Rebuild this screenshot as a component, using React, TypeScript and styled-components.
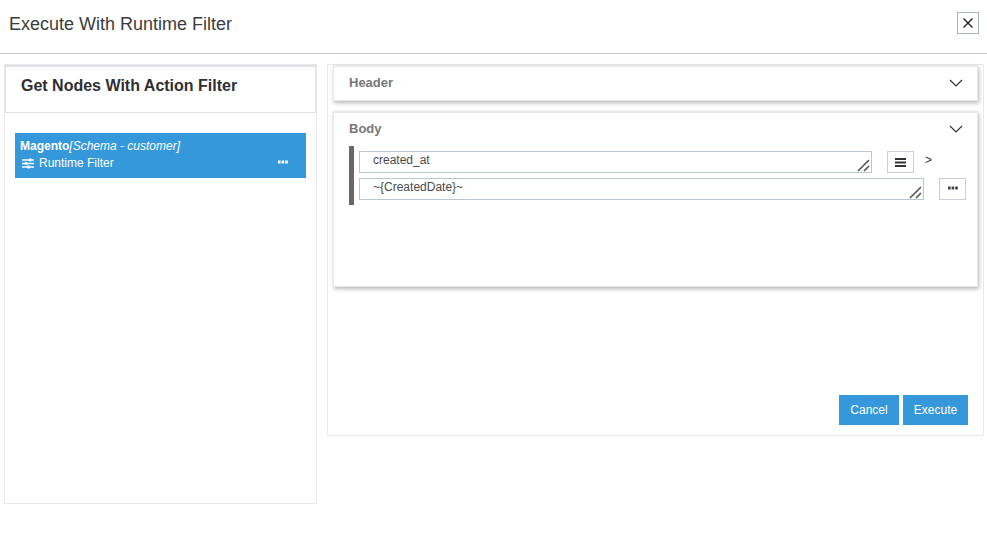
import React from "react";
import styled, { createGlobalStyle } from "styled-components";

const Global = createGlobalStyle`
  html, body { margin: 0; padding: 0; background: #fff; }
  body { font-family: "Liberation Sans", Arial, sans-serif; color: #333; }
  * { box-sizing: border-box; }
`;

const Page = styled.div`
  width: 987px;
  height: 535px;
  overflow: hidden;
  background: #fff;
`;

const TitleBar = styled.header`
  height: 54px;
  display: flex;
  align-items: flex-start;
  justify-content: space-between;
  border-bottom: 1px solid #c9cccd;
  padding: 12px 8px 0 9px;
`;

const Title = styled.h1`
  margin: 0;
  font-size: 18px;
  line-height: 24px;
  font-weight: 400;
  color: #3c3c3c;
`;

const CloseButton = styled.button`
  width: 22px;
  height: 22px;
  padding: 0;
  display: flex;
  align-items: center;
  justify-content: center;
  background: #fff;
  border: 1px solid #a8b4be;
`;

const Content = styled.main`
  display: flex;
  align-items: flex-start;
  padding: 10px 3px 0 4px;
  gap: 10px;
`;

const LeftPanel = styled.section`
  width: 313px;
  height: 440px;
  border: 1px solid #e6e8ea;
`;

const LeftHead = styled.div`
  height: 48px;
  border: 1px solid #e0e2e5;
  border-top-width: 2px;
  padding: 8px 0 0 15px;
`;

const LeftTitle = styled.h2`
  margin: 0;
  font-size: 16px;
  line-height: 22px;
  font-weight: 700;
  color: #2f2f33;
`;

const LeftBody = styled.div`
  padding: 20px 10px;
`;

const Card = styled.div`
  height: 45px;
  background: #3498db;
  color: #fff;
  padding: 5px 5px 0 5px;
  font-size: 12px;
  line-height: 17px;
`;

const CardLine = styled.div`
  display: flex;
  align-items: center;
  white-space: nowrap;
`;

const Strong = styled.strong`
  font-weight: 700;
`;

const Em = styled.em`
  font-style: italic;
`;

const SliderIcon = styled.svg`
  margin-left: 2px;
`;

const FilterLabel = styled.span`
  margin-left: 5px;
  flex: 1;
`;

const CardDots = styled.span`
  display: flex;
  margin: 0 13px 4px 0;
`;

const RightPanel = styled.section`
  width: 657px;
  height: 372px;
  border: 1px solid #e8eaeb;
  padding: 0 5px;
  display: flex;
  flex-direction: column;
`;

const Accordion = styled.div<{ $height: number }>`
  height: ${(p) => p.$height}px;
  margin-bottom: 10px;
  background: #fff;
  border: 1px solid #e6e8ea;
  border-top-width: 2px;
  box-shadow: 1px 2px 4px rgba(0, 0, 0, 0.28);
  padding: 0 11px 0 15px;
`;

const AccordionHead = styled.div`
  display: flex;
  justify-content: space-between;
  align-items: center;
  padding-top: 5px;
  height: 20px;
  box-sizing: content-box;
`;

const AccordionTitle = styled.span`
  font-size: 13px;
  font-weight: 700;
  color: #787878;
`;

const Chevron = styled.svg`
  margin: 2px 3px 0 0;
`;

const Group = styled.div`
  margin-top: 8px;
  border-left: 5px solid #6b6767;
  padding: 5px 0 5px 5px;
  display: flex;
  flex-direction: column;
  gap: 5px;
  height: 59px;
`;

const Row = styled.div`
  display: flex;
  align-items: flex-start;
`;

const Field = styled.div<{ $width: number }>`
  position: relative;
  flex: none;
  width: ${(p) => p.$width}px;
  height: 22px;
  border: 1px solid #bcc6d2;
  font-size: 12px;
  line-height: 14px;
  padding: 1px 0 0 13px;
  color: #4b4b4b;
`;

const Handle = styled.svg`
  position: absolute;
  right: 0;
  bottom: 0;
`;

const IconButton = styled.button<{ $left: number }>`
  flex: none;
  width: 27px;
  height: 22px;
  margin-left: ${(p) => p.$left}px;
  padding: 0;
  display: flex;
  align-items: center;
  justify-content: center;
  background: #fff;
  border: 1px solid #c9cfd6;
`;

const MoreDots = styled.span`
  display: flex;
  margin-bottom: 3px;
`;

const Operator = styled.span`
  margin: 2px 0 0 11px;
  font-size: 12px;
  line-height: 14px;
  color: #333;
`;

const Actions = styled.div`
  margin-top: auto;
  padding: 0 10px 10px 0;
  display: flex;
  justify-content: flex-end;
  gap: 4px;
`;

const ActionButton = styled.button<{ $width: number }>`
  width: ${(p) => p.$width}px;
  height: 30px;
  padding: 0;
  border: none;
  background: #3498db;
  color: #fff;
  font-family: "Liberation Sans", Arial, sans-serif;
  font-size: 12px;
`;

const ResizeGrip = () => (
  <Handle width="14" height="14" viewBox="0 0 14 14">
    <path d="M1 13 L12 2 M7 13 L12 8" stroke="#555" strokeWidth="1.6" fill="none" />
  </Handle>
);

const Down = () => (
  <Chevron width="14" height="8" viewBox="0 0 14 8">
    <path d="M1 1 L7 7 L13 1" stroke="#333" strokeWidth="1.2" fill="none" />
  </Chevron>
);

const Dots = ({ color }: { color: string }) => (
  <svg width="10" height="4" viewBox="0 0 10 4">
    <rect x="0" y="0.5" width="2.6" height="3" fill={color} />
    <rect x="3.6" y="0.5" width="2.6" height="3" fill={color} />
    <rect x="7.2" y="0.5" width="2.6" height="3" fill={color} />
  </svg>
);

export default function App() {
  return (
    <Page>
      <Global />
      <TitleBar>
        <Title>Execute With Runtime Filter</Title>
        <CloseButton aria-label="Close">
          <svg width="12" height="12" viewBox="0 0 12 12">
            <path d="M1.5 1.5 L10.5 10.5 M10.5 1.5 L1.5 10.5" stroke="#222" strokeWidth="1.4" fill="none" />
          </svg>
        </CloseButton>
      </TitleBar>
      <Content>
        <LeftPanel>
          <LeftHead>
            <LeftTitle>Get Nodes With Action Filter</LeftTitle>
          </LeftHead>
          <LeftBody>
            <Card>
              <CardLine>
                <Strong>Magento</Strong>
                <Em>[Schema - customer]</Em>
              </CardLine>
              <CardLine>
                <SliderIcon width="12" height="11" viewBox="0 0 12 11">
                  <path d="M0 2 H12 M0 5.5 H12 M0 9 H12" stroke="#fff" strokeWidth="1.3" />
                  <rect x="7" y="0.5" width="2.2" height="3" fill="#fff" />
                  <rect x="3" y="4" width="2.2" height="3" fill="#fff" />
                  <rect x="5.5" y="7.5" width="2.2" height="3" fill="#fff" />
                </SliderIcon>
                <FilterLabel>Runtime Filter</FilterLabel>
                <CardDots>
                  <Dots color="#fff" />
                </CardDots>
              </CardLine>
            </Card>
          </LeftBody>
        </LeftPanel>
        <RightPanel>
          <Accordion $height={36}>
            <AccordionHead>
              <AccordionTitle>Header</AccordionTitle>
              <Down />
            </AccordionHead>
          </Accordion>
          <Accordion $height={176}>
            <AccordionHead>
              <AccordionTitle>Body</AccordionTitle>
              <Down />
            </AccordionHead>
            <Group>
              <Row>
                <Field $width={513}>
                  created_at
                  <ResizeGrip />
                </Field>
                <IconButton $left={15} aria-label="Menu">
                  <svg width="11" height="9" viewBox="0 0 11 9">
                    <path d="M0 1 H11 M0 4.5 H11 M0 8 H11" stroke="#333" strokeWidth="1.8" />
                  </svg>
                </IconButton>
                <Operator>&gt;</Operator>
              </Row>
              <Row>
                <Field $width={565}>
                  ~{"{"}CreatedDate{"}"}~
                  <ResizeGrip />
                </Field>
                <IconButton $left={15} aria-label="More">
                  <MoreDots>
                    <Dots color="#444" />
                  </MoreDots>
                </IconButton>
              </Row>
            </Group>
          </Accordion>
          <Actions>
            <ActionButton $width={60}>Cancel</ActionButton>
            <ActionButton $width={65}>Execute</ActionButton>
          </Actions>
        </RightPanel>
      </Content>
    </Page>
  );
}
